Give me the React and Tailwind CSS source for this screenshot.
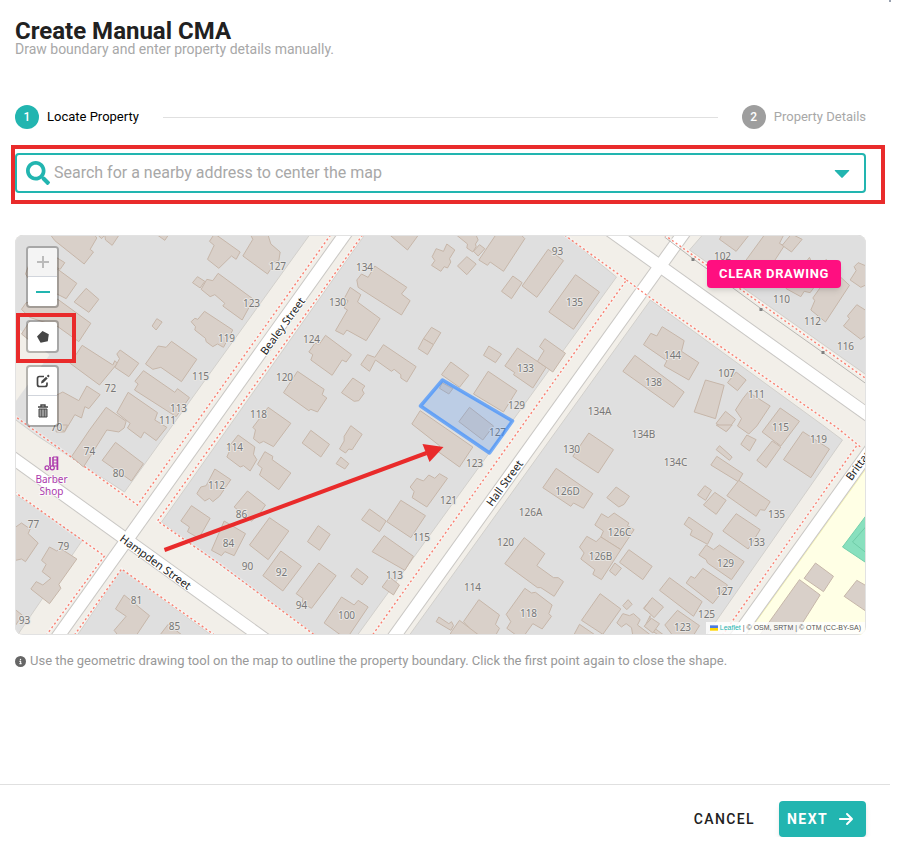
import { useState } from 'react';
import { FaSearch, FaCaretDown } from 'react-icons/fa';
import { FaArrowRight, FaCircleInfo } from 'react-icons/fa6';

// Building outlines, grouped by tile. Tile points are stored at 3x map scale.
const TILES = [
  {
    x: -5,
    y: -5,
    buildings: [
      '124,16 136,32 224,102 252,66 242,58 262,24 256,16',
      '266,16 276,26 286,16',
      '286,16 288,30 308,46 328,16',
      '445,16 466,31 476,16',
      '612,16 600,34 614,46 594,88 628,115 666,78 680,88 692,66 622,16',
      '564,140 586,154 572,174 549,158',
      '575,178 592,148 610,152 626,130 732,208 698,270 640,228 646,220 616,194 602,200',
      '545,275 556,265 565,268 585,244 670,300 642,352 624,342 610,350 590,335 588,325 556,300 558,290',
      '428,288 442,266 458,276 440,300',
      '140,82 166,98 152,118 140,112',
      '48,132 60,100 145,118 202,160 170,206 60,150',
      '230,175 268,208 238,247 194,216',
      '36,238 50,218 145,208 244,280 208,335 145,290 60,262',
      '36,312 60,275 80,290 56,328',
      '218,346 310,405 316,392 324,400 270,465 182,400',
      '332,360 388,400 358,440 316,412 330,386 322,372',
      '486,334 562,388 516,455 454,412 430,418 408,402 446,348 470,352',
      '402,422 496,487 504,476 540,503 500,560 375,480 386,462 376,454',
      '140,496 160,486 208,512 232,468 272,494 238,536 226,530 216,564 196,554 165,606 140,606',
      '290,532 350,574 344,594 328,606 292,600 222,711 186,680 240,600',
      '356,487 444,548 436,570 472,592 440,632 404,606 394,624 354,594 362,580 322,548',
    ],
  },
  {
    x: 205,
    y: -5,
    buildings: [
      '94,16 100,28 70,78 144,132 160,108 158,98 178,92 182,66 154,42 146,16',
      '466,108 562,172 546,192 572,212 546,255 416,172 412,150 426,132 446,142',
      '392,172 424,194 414,216 482,266 440,332 382,300 372,314 348,302 384,240 374,234 386,212 374,206',
      '636,292 664,308 642,344 612,326',
      '612,326 642,344 624,374 596,356',
      '318,316 396,374 380,396 368,390 338,436 274,390 280,374 268,366 286,340 300,342',
      '492,344 590,410 562,456 544,444 544,434 524,418 516,424 468,390 450,424 424,404 444,374 466,382',
      '400,444 436,468 428,480 434,490 418,512 404,514 366,488',
      '234,424 314,478 308,494 322,504 294,546 274,538 268,542 192,488',
      '146,532 214,580 162,650 132,634 120,640 102,626 108,600 100,592',
      '512,16 564,60 596,16',
    ],
  },
  {
    x: 415,
    y: -5,
    buildings: [
      '52,42 76,60 60,86 64,96 54,114 44,110 34,124 6,106 16,92 8,80 20,56 42,64',
      '82,16 114,42 112,54 130,66 140,50 138,42 146,30 140,16',
      '132,64 150,44 166,56 146,78',
      '198,16 148,90 174,106 182,96 222,124 286,26 276,16',
      '112,80 140,102 112,134 84,108',
      '356,58 402,92 322,202 278,168',
      '250,138 278,158 246,206 216,184',
      '438,134 510,186 432,298 358,246',
      '178,348 216,372 198,398 162,376',
      '264,354 350,412 310,474 252,434 256,428 226,408',
      '346,326 408,370 370,426 324,394 344,362 330,350',
      '64,396 118,436 90,472 36,434',
      '176,424 262,482 222,546 132,492',
      '120,532 192,588 160,630 88,575',
      '38,458 70,476 58,492 30,475',
    ],
  },
  {
    x: 625,
    y: -5,
    buildings: [
      '240,28 290,64 328,16 246,16',
      '374,16 320,90 350,130 400,100 434,48 420,40 432,16',
      '456,12 488,28 456,66 428,46',
      '510,82 440,176 484,200 494,184 512,188 540,150',
      '560,88 580,120 630,166 558,276 514,240 526,212 520,204 540,176',
      '656,98 690,112 690,160 664,172 632,150 650,122 644,110',
      '652,224 690,248 690,310 664,328 612,288 630,266 624,258',
      '68,290 134,332 126,364 178,398 148,450 74,408 82,392 12,344 34,310 52,318',
      '-14,376 134,486 102,532 -50,424',
      '198,450 254,466 228,566 164,546',
      '290,426 320,450 294,482 264,458',
      '326,486 392,528 352,588 328,612 294,588 306,566 288,540 310,506',
      '422,534 480,574 424,648 368,606',
      '258,544 288,568 262,604 230,580',
    ],
  },
  {
    x: -5,
    y: 190,
    buildings: [
      '318,52 402,116 366,168 278,106',
      '616,132 664,164 630,214 610,230 600,220 586,228 562,206 574,186 590,182',
      '546,242 602,280 568,340 534,320 540,306 514,288',
      '36,294 62,312 56,326 86,354 48,410 36,402 10,408 10,312',
      '120,366 142,378 152,370 202,402 148,478 154,490 120,536 64,492 80,470 100,480 124,460 98,440 110,418 96,406',
      '10,554 20,556 38,570 10,614',
      '344,510 420,572 380,632 326,632 314,616 350,574 318,552',
      '476,598 520,632 450,632',
      '142,0 165,20 174,0',
    ],
  },
  {
    x: 205,
    y: 190,
    buildings: [
      '274,16 330,58 304,96 248,54',
      '394,2 428,28 398,74 388,72 378,84 360,72 374,48 374,34',
      '364,96 388,116 376,132 350,116',
      '56,30 106,66 102,88 112,104 92,138 72,122 62,126 22,96 30,78 24,70',
      '136,80 160,94 158,104 214,144 178,194 120,150 128,130 114,118',
      '84,198 138,240 118,270 96,288 44,246',
      '150,278 208,318 146,404 90,360',
      '14,288 78,326 44,392 16,380 6,392 -24,376',
      '296,302 332,328 300,376 264,350',
      '184,378 246,424 190,498 130,452',
      '298,414 350,452 276,550 248,534 250,520 230,506',
      '412,430 446,456 428,480 394,454',
      '450,252 500,288 480,320 426,284',
      '544,226 618,272 574,338 502,290',
      '494,332 582,394 556,436 458,380',
      '510,456 540,480 522,510 488,486',
      '366,516 404,540 416,526 446,546 388,632 366,632 314,594',
      '572,186 592,160 612,168 628,150 646,160 660,146 684,160 622,246 578,218 584,200',
    ],
  },
  {
    x: 415,
    y: 190,
    buildings: [
      '-28,-43 130,66 90,126 26,80 30,62 -53,-3',
      '478,24 552,74 506,144 430,94',
      '380,130 490,206 462,250 432,234 424,244 340,188',
      '560,186 600,214 584,238 568,246 532,218',
      '516,266 536,278 554,264 598,294 594,302 614,314 574,374 514,336 522,318 496,300',
      '472,334 500,350 514,336 574,374 516,464 490,448 496,434 454,402 464,384 450,366',
      '556,414 576,430 558,452 540,438',
      '284,338 346,386 322,422 372,458 386,458 402,470 374,514 334,488 324,488 226,416',
      '286,490 306,504 318,502 368,540 358,566 366,574 338,612 310,596 284,632 262,632 232,610 244,590 230,568',
      '148,524 210,570 198,598 210,610 198,632 140,632 102,590',
      '90,586 150,632 60,632 66,620',
      '28,576 58,596 66,590 72,602 64,616 20,590',
      '512,506 574,552 520,628 456,586',
      '596,524 608,538 592,554 580,542',
      '450,598 500,632 432,632',
      '580,566 600,572 612,566 632,584 624,600 666,632 610,632 606,608 590,596 576,606 562,594',
      '598,374 668,424 640,464 570,412',
      '662,526 642,550 662,566',
      '662,572 646,604 690,632 700,628 662,600',
    ],
  },
  {
    x: 625,
    y: 190,
    buildings: [
      '230,0 260,20 278,0',
      '490,20 570,72 514,158 432,104',
      '398,48 424,66 380,128 352,106',
      '322,30 350,44 330,78 304,58',
      '240,62 278,96 270,106 230,74',
      '232,94 310,146 296,170 214,120',
      '298,166 392,230 376,256 362,254 350,274 262,212',
      '196,182 216,196 198,226 174,210',
      '226,202 260,226 230,268 192,240',
      '290,266 362,314 326,372 250,318',
      '148,276 220,326 204,358 152,330 158,316 134,298',
      '200,360 222,374 240,360 314,410 276,464 204,414 200,404 178,390',
      '190,430 264,480 220,536 140,474 154,454 166,460',
      '90,458 188,530 162,574 60,496',
      '114,556 180,602 160,634 100,632 76,600',
      '38,518 72,546 44,578 14,550',
      '36,580 60,596 40,624 14,604',
      '528,414 582,454 552,500 494,460',
      '480,464 542,510 460,640 354,640',
      '652,466 690,488 690,566 614,514',
    ],
  },
];

const BLOCKS = [
  '0,0 295,0 110,257 23,201 0,184',
  '350,0 550,0 602,42 343,400 302,400 147,287',
  '636,65 808,190 828,205 692,400 395,400',
  '688,0 675,15 852,140 852,0',
  '0,259 68,305 3,400 0,400',
  '107,335 63,400 197,400',
];

const ROADS = [
  'M-10 217 L254 407',
  'M337 -10 L36 412',
  'M675 -10 L373 411',
  'M588 -10 L862 186',
  'M858 212 L716 410',
];

const FOOTWAYS = [
  'M316 0 L123 270 L0 181',
  'M348 0 L143 286 L205 329 L300 400',
  'M550 0 L612 45 L358 400',
  'M612 45 L632 60 L823 193 L846 212',
  'M842 211 L708 400',
  'M650 0 L852 144',
  'M0 257 L90 321 L32 400',
  'M60 400 L107 334 L200 400',
];

const HOUSE_NUMBERS = [
  ['93', 543, 16], ['135', 560, 67], ['127', 263, 31], ['134', 350, 32], ['123', 237, 68],
  ['130', 323, 67], ['124', 297, 104], ['119', 212, 103], ['120', 270, 142], ['118', 244, 179],
  ['115', 186, 141], ['113', 164, 173], ['111', 153, 185], ['72', 96, 153], ['70', 42, 192],
  ['74', 75, 216], ['80', 104, 238], ['114', 220, 212], ['112', 202, 250], ['86', 227, 279],
  ['84', 214, 308], ['90', 233, 331], ['92', 267, 337], ['94', 287, 370], ['100', 332, 380],
  ['113', 380, 340], ['115', 407, 302], ['121', 434, 265], ['123', 460, 228], ['129', 502, 170],
  ['133', 511, 133], ['127', 483, 197], ['134A', 585, 176], ['134B', 629, 199], ['134C', 661, 227],
  ['144', 658, 120], ['138', 639, 147], ['107', 712, 138], ['111', 742, 159], ['115', 766, 192],
  ['119', 804, 204], ['102', 708, 21], ['110', 767, 64], ['112', 798, 86], ['116', 831, 111],
  ['135', 762, 279], ['133', 742, 307], ['129', 711, 328], ['127', 710, 356], ['125', 692, 379],
  ['123', 668, 392], ['130', 557, 214], ['126D', 553, 256], ['126A', 516, 277], ['126C', 605, 297],
  ['126B', 586, 321], ['120', 491, 307], ['114', 458, 352], ['118', 514, 378], ['77', 19, 289],
  ['79', 49, 311], ['93', 10, 385], ['81', 122, 365], ['85', 160, 391],
];

const STREETS = [
  ['Bealey Street', 268, 91, -54],
  ['Hampden Street', 141, 327, 36],
  ['Hall Street', 490, 248, -54],
  ['Brittan Street', 854, 216, -54],
];

function StreetMap({ hasDrawing }) {
  return (
    <svg
      viewBox="0 0 852 400"
      preserveAspectRatio="xMidYMid slice"
      className="block w-full h-full bg-[#f2efe9]"
      fontFamily="'Noto Sans', sans-serif"
      textAnchor="middle"
      role="img"
      aria-label="Street map"
    >
      {/* Land */}
      <g fill="#dfdfdf" stroke="#d2d0cc" strokeWidth="1">
        {BLOCKS.map((points) => (
          <polygon key={points} points={points} />
        ))}
      </g>
      <polygon points="0,90 35,120 0,168" fill="#f2efe9" />
      <polygon points="852,233 732,400 852,400" fill="#ffffe5" stroke="#f5f3b4" />
      <polygon points="852,280 828,312 852,328" fill="#88e0be" stroke="#73cfab" />
      <path d="M852 291 L838 307 L852 318" fill="none" stroke="#6fcba7" />

      {/* Roads */}
      <g fill="none" stroke="#c9c7c4" strokeWidth="14">
        {ROADS.map((d) => (
          <path key={d} d={d} />
        ))}
      </g>
      <g fill="none" stroke="#fff" strokeWidth="12">
        {ROADS.map((d) => (
          <path key={d} d={d} />
        ))}
      </g>
      <g fill="none" stroke="#fff" strokeWidth="3" opacity="0.4">
        {FOOTWAYS.map((d) => (
          <path key={d} d={d} />
        ))}
      </g>
      <g fill="none" stroke="#fa8072" strokeWidth="1.4" strokeDasharray="2 2.6">
        {FOOTWAYS.map((d) => (
          <path key={d} d={d} />
        ))}
      </g>

      {/* Power line */}
      <path d="M650 2 L679 24 L747 74 L809 118 L852 149" fill="none" stroke="#a9a8a5" strokeWidth="0.8" />
      <path d="M677 23h3v3h-3z M745 73h3v3h-3z M807 116h3v3h-3z" fill="#808080" />

      {/* Buildings */}
      {TILES.map((tile) => (
        <g
          key={`${tile.x},${tile.y}`}
          transform={`translate(${tile.x} ${tile.y}) scale(0.3333)`}
          fill="#d9d0c9"
          stroke="#c6b6a9"
          strokeWidth="3"
        >
          {tile.buildings.map((points) => (
            <polygon key={points} points={points} />
          ))}
        </g>
      ))}

      {/* Labels */}
      <g fontSize="10" fill="#777" stroke="#e8e6e3" strokeWidth="2" strokeLinejoin="round" paintOrder="stroke">
        {HOUSE_NUMBERS.map(([label, x, y]) => (
          <text key={`${label}-${x}`} x={x} y={y + 4}>
            {label}
          </text>
        ))}
      </g>
      <g fontSize="11" fill="#222" stroke="#fff" strokeWidth="2" strokeLinejoin="round" paintOrder="stroke">
        {STREETS.map(([name, x, y, angle]) => (
          <text key={name} transform={`translate(${x} ${y}) rotate(${angle})`} y="4">
            {name}
          </text>
        ))}
      </g>

      {/* Barber shop */}
      <g fill="none" stroke="#ac39ac">
        <path d="M35.5 222v9 M38.5 222v9" strokeWidth="1.6" />
        <circle cx="32.5" cy="232.8" r="2" strokeWidth="1.2" />
        <circle cx="37.8" cy="232.8" r="2" strokeWidth="1.2" />
        <path d="M42.9 221.500v13.500" strokeWidth="1.8" />
        <path d="M38.500 222h4 M39 225h4 M39 228h4 M39 231h4" strokeWidth="1" />
      </g>
      <g fontSize="10" fill="#ac39ac" stroke="#fff" strokeOpacity="0.7" strokeWidth="2" strokeLinejoin="round" paintOrder="stroke">
        <text x="37" y="248">Barber</text>
        <text x="37" y="260">Shop</text>
      </g>

      {/* Property boundary */}
      {hasDrawing && (
        <polygon
          points="428,145 498,186 475,218 406,171"
          fill="#3388ff"
          fillOpacity="0.2"
          stroke="#3388ff"
          strokeOpacity="0.65"
          strokeWidth="3.5"
          strokeLinejoin="round"
        />
      )}

      {/* Guide arrow */}
      <path d="M150 315 L412 218" stroke="#e92b2b" strokeWidth="4" />
      <polygon points="408,209 429,212 415,227" fill="#e92b2b" />
    </svg>
  );
}

function ControlGroup({ children }) {
  return (
    <div className="flex flex-col w-[33px] rounded border-2 border-black/25 bg-white bg-clip-padding divide-y divide-gray-300 overflow-hidden">
      {children}
    </div>
  );
}

function ControlButton({ label, disabled, onClick, children }) {
  return (
    <button
      type="button"
      aria-label={label}
      disabled={disabled}
      onClick={onClick}
      className="flex items-center justify-center h-[29px] text-[#464646] disabled:bg-[#f4f4f4] disabled:text-[#bbb]"
    >
      {children}
    </button>
  );
}

export default function App() {
  const [query, setQuery] = useState('');
  const [hasDrawing, setHasDrawing] = useState(true);

  return (
    <div className="relative mr-4 bg-white font-[Roboto,sans-serif] text-[#212121]">
      <span className="absolute top-0 -right-px w-0.5 h-0.5 bg-gray-400" />

      <main className="pt-[21px] pl-[15px] pr-6">
        <h1 className="text-2xl leading-5 font-bold">Create Manual CMA</h1>
        <p className="text-sm leading-4 text-[#a8a8a8]">Draw boundary and enter property details manually.</p>

        {/* Stepper */}
        <ol className="flex items-center mt-12 text-[13px]">
          <li className="flex items-center gap-2">
            <span className="flex items-center justify-center w-6 h-6 rounded-full bg-[#22b5b0] text-xs font-medium text-white">1</span>
            <span className="text-black">Locate Property</span>
          </li>
          <li aria-hidden="true" className="flex-1 h-px mx-6 bg-[#e0e0e0]" />
          <li className="flex items-center gap-2">
            <span className="flex items-center justify-center w-6 h-6 rounded-full bg-[#9e9e9e] text-xs font-medium text-white">2</span>
            <span className="text-[#a8a8a8]">Property Details</span>
          </li>
        </ol>

        {/* Address search */}
        <div className="relative mt-6">
          <label className="flex items-center h-10 pl-[9px] pr-3 gap-1 rounded border-2 border-[#22b5b0]">
            <FaSearch className="w-6 h-6 shrink-0 text-[#22b5b0]" />
            <input
              type="text"
              value={query}
              onChange={(e) => setQuery(e.target.value)}
              placeholder="Search for a nearby address to center the map"
              aria-label="Search for a nearby address"
              className="flex-1 min-w-0 text-base outline-none placeholder:text-[#a8a8a8]"
            />
            <svg viewBox="0 0 16 10" className="w-4 h-2.5 mt-0.5 mr-0.5 shrink-0" fill="#22b5b0" aria-hidden="true">
              <path d="M1.200 1H14.800Q15.800 1 15 2L8.700 8.600Q8 9.200 7.300 8.600L1 2Q.2 1 1.200 1Z" />
            </svg>
          </label>
          <div className="absolute -top-2 -bottom-[11px] -left-1 -right-[19px] border-4 border-[#e92b2b] pointer-events-none" />
        </div>

        {/* Map */}
        <div className="relative h-[400px] mt-[42px] rounded-lg overflow-hidden">
          <StreetMap hasDrawing={hasDrawing} />
          <div className="absolute inset-0 rounded-lg border border-[#e2e2e2] pointer-events-none" />

          <div className="absolute top-[11px] left-[11px] flex flex-col gap-3">
            <ControlGroup>
              <ControlButton label="Zoom in" disabled>
                <svg viewBox="0 0 14 14" className="w-3.5 h-3.5" stroke="currentColor" strokeWidth="2">
                  <path d="M7 1v12M1 7h12" />
                </svg>
              </ControlButton>
              <ControlButton label="Zoom out">
                <svg viewBox="0 0 14 14" className="w-3.5 h-3.5" stroke="#22b5b0" strokeWidth="2">
                  <path d="M0 7h14" />
                </svg>
              </ControlButton>
            </ControlGroup>
            <ControlGroup>
              <ControlButton label="Draw a polygon">
                <svg viewBox="0 0 14 14" className="w-3.5 h-3.5" fill="currentColor">
                  <path d="M6.500 1 L12.800 4.200 L11.800 11.200 L4.600 12.800 L1 6.500 Z" />
                </svg>
              </ControlButton>
            </ControlGroup>
            <ControlGroup>
              <ControlButton label="Edit layers">
                <svg viewBox="0 0 14 14" className="w-3.5 h-3.5" fill="none" stroke="currentColor" strokeWidth="1.7">
                  <path d="M8 2.500H3.500Q1.500 2.500 1.500 4.500V10.500Q1.500 12.500 3.500 12.500H9Q11 12.500 11 10.500V8.500" />
                  <path d="M5 9.500 L5.500 7 L10 2.800 L11.700 4.500 L7.300 8.800 Z" fill="currentColor" stroke="none" />
                  <path d="M11.500 1.200 L13 2.700" strokeWidth="2" />
                </svg>
              </ControlButton>
              <ControlButton label="Delete layers" onClick={() => setHasDrawing(false)}>
                <svg viewBox="0 0 14 14" className="w-3.5 h-3.5" fill="none" stroke="currentColor">
                  <path d="M2 3h10M5 2.500v-1.500h4v1.500" strokeWidth="1.4" />
                  <path d="M3 5h8v8H3z" fill="#9a9a9a" />
                  <path d="M5.500 5v8M8.500 5v8" strokeWidth="0.6" />
                </svg>
              </ControlButton>
            </ControlGroup>
          </div>
          <div className="absolute top-[78px] left-px w-[60px] h-[50px] border-4 border-[#e92b2b] pointer-events-none" />

          <button
            type="button"
            onClick={() => setHasDrawing(false)}
            className="absolute top-[25px] right-[25px] h-7 px-3 rounded bg-[#ff0f80] text-[13px] font-bold tracking-wider text-white shadow-md"
          >
            CLEAR DRAWING
          </button>

          <div className="absolute bottom-px right-px flex items-center gap-0.5 px-1 h-3 bg-white/80 font-['Liberation_Sans',sans-serif] text-[7px] text-[#555] whitespace-nowrap">
            <svg viewBox="0 0 12 8" className="w-2 h-1.5">
              <path fill="#4c7be1" d="M0 0h12v4H0z" />
              <path fill="#ffd500" d="M0 4h12v4H0z" />
            </svg>
            <a href="#leaflet" className="text-[#22b5b0]">Leaflet</a>
            <span>| © OSM, SRTM | © OTM (CC-BY-SA)</span>
          </div>
        </div>

        <p className="flex items-center gap-1 mt-4 text-[13px] leading-5 text-[#999]">
          <FaCircleInfo className="w-[11px] h-[11px] text-[#666]" />
          Use the geometric drawing tool on the map to outline the property boundary. Click the first point again to close the shape.
        </p>
      </main>

      <footer className="flex items-center justify-end gap-2 mt-[113px] pt-4 pr-6 border-t border-[#e0e0e0]">
        <button type="button" className="h-9 px-4 text-sm font-medium tracking-widest">
          CANCEL
        </button>
        <button
          type="button"
          className="flex items-center gap-2.5 h-9 pl-2 pr-3 rounded bg-[#22b5b0] text-sm font-bold tracking-widest text-white shadow-md"
        >
          NEXT
          <FaArrowRight className="w-4 h-4" />
        </button>
      </footer>
    </div>
  );
}
